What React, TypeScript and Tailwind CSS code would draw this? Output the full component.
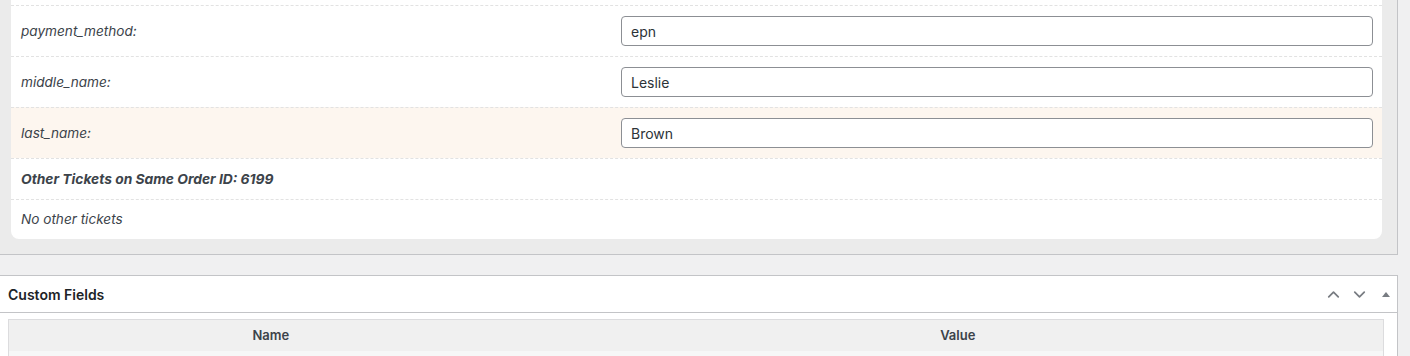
import { ChevronUp, ChevronDown } from 'lucide-react';

const font = { fontFamily: 'Inter, "Liberation Sans", sans-serif' };

const fields = [
  { label: 'payment_method:', value: 'epn' },
  { label: 'middle_name:', value: 'Leslie' },
  { label: 'last_name:', value: 'Brown', active: true },
];

function FieldRow({ label, value, active }: { label: string; value: string; active?: boolean }) {
  return (
    <div
      className={`flex h-[51px] items-center border-t border-dashed border-[#e2e2e2] ${
        active ? 'bg-[#fdf6ef]' : ''
      }`}
    >
      <div className="w-[610px] shrink-0 pl-[10px] text-[13.6px] italic text-[#3c434a]">{label}</div>
      <input
        readOnly
        value={value}
        className="mr-[9px] h-[30px] flex-1 rounded-[4px] border border-[#8c8f94] bg-white px-[9px] text-[14px] text-[#2c3338] outline-none"
        style={font}
      />
    </div>
  );
}

export default function App() {
  return (
    <div className="min-h-screen bg-[#f0f0f1] text-[#1d2327]" style={font}>
      <div className="w-[1398px] border-r border-b border-[#c3c4c7] bg-[#ebebeb] pl-[11px] pr-[15px] pb-[15px]">
        <div className="rounded-b-[8px] bg-white pt-[5px]">
          {fields.map((f) => (
            <FieldRow key={f.label} {...f} />
          ))}
          <div className="flex h-[41px] items-center border-t border-dashed border-[#e2e2e2] pl-[10px] text-[13.8px] font-bold italic text-[#3c434a]">
            Other Tickets on Same Order ID: 6199
          </div>
          <div className="flex h-[40px] items-center border-t border-dashed border-[#e2e2e2] pl-[10px] text-[13.6px] italic text-[#3c434a]">
            No other tickets
          </div>
        </div>
      </div>

      <div className="mt-[20px] w-[1398px] border-t border-r border-[#c3c4c7] bg-white">
        <div className="flex h-[37px] items-center justify-between border-b border-[#c3c4c7] pl-[8px] pr-[2px]">
          <h2 className="text-[14px] font-semibold text-[#1d2327]">Custom Fields</h2>
          <div className="flex items-center gap-[7px] text-[#787c82]">
            <ChevronUp size={19} strokeWidth={2.2} />
            <ChevronDown size={19} strokeWidth={2.2} />
            <svg width="18" height="18" viewBox="0 0 18 18" className="ml-[1px]">
              <path d="M5 12 L9 7 L13 12 Z" fill="#787c82" />
            </svg>
          </div>
        </div>
        <div className="pl-[8px] pr-[13px] pt-[6px]">
          <table className="w-full border border-[#dcdcde] text-[13px]">
            <thead>
              <tr className="h-[31px] bg-[#f0f0f0]">
                <th className="w-[524px] font-semibold text-[#3c434a]">Name</th>
                <th className="font-semibold text-[#3c434a]">Value</th>
              </tr>
            </thead>
            <tbody>
              <tr className="h-[40px] bg-[#f6f7f7]">
                <td></td>
                <td></td>
              </tr>
            </tbody>
          </table>
        </div>
      </div>
    </div>
  );
}
